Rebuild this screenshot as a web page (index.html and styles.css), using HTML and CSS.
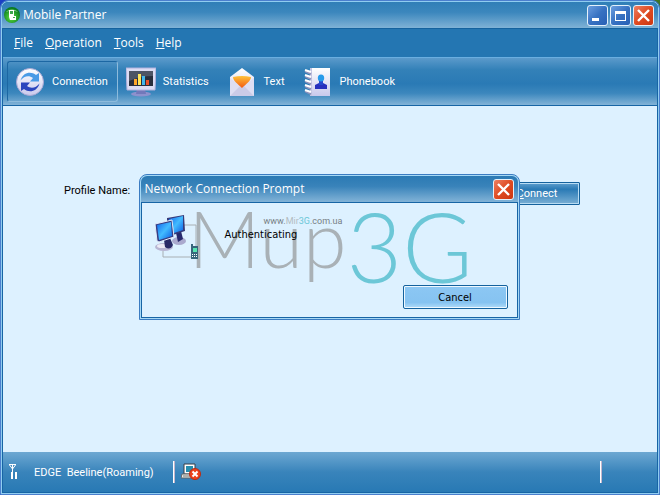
FILE: index.html
```html
<!DOCTYPE html>
<html lang="en">
<head>
    <meta charset="UTF-8">
    <meta name="viewport" content="width=device-width, initial-scale=1.0">
    <title>Mobile Partner</title>
    <link rel="stylesheet" href="styles.css">
</head>
<body>
    <div class="window">
        <!-- Title bar -->
        <header class="titlebar">
            <svg class="app-icon" width="18" height="18" viewBox="0 0 18 18">
                <defs>
                    <radialGradient id="green" cx="45%" cy="65%" r="60%">
                        <stop offset="0" stop-color="#5fe03c"/>
                        <stop offset="1" stop-color="#087a22"/>
                    </radialGradient>
                </defs>
                <circle cx="9" cy="9" r="8" fill="url(#green)"/>
                <path d="M3 6a7 5 0 0 1 12 0a16 16 0 0 0-12 0z" fill="#b5e8ae" opacity=".7"/>
                <path d="M6 4h5v6h2v4H7l-1-3z" fill="#fff"/>
                <path d="M7 5h3v3H7zM10 11h2v1h-2z" fill="#3fa44e"/>
            </svg>
            <h1>Mobile Partner</h1>
            <div class="window-buttons">
                <button class="win-btn" aria-label="Minimize">
                    <svg width="19" height="19" viewBox="0 0 19 19"><path d="M4 12h7v3H4z" fill="#fff"/></svg>
                </button>
                <button class="win-btn" aria-label="Maximize">
                    <svg width="19" height="19" viewBox="0 0 19 19"><path d="M4 5h11v10H4zM5 8v6h9V8z" fill="#fff" fill-rule="evenodd"/></svg>
                </button>
                <button class="win-btn close" aria-label="Close">
                    <svg width="19" height="19" viewBox="0 0 19 19"><path d="M4 4l11 11M15 4L4 15" stroke="#fff" stroke-width="2.4"/></svg>
                </button>
            </div>
        </header>

        <!-- Menu -->
        <nav class="menu">
            <a href="#file"><u>F</u>ile</a>
            <a href="#operation"><u>O</u>peration</a>
            <a href="#tools"><u>T</u>ools</a>
            <a href="#help"><u>H</u>elp</a>
        </nav>

        <!-- Toolbar -->
        <div class="toolbar">
            <button class="tool active">
                <svg width="30" height="30" viewBox="0 0 30 30">
                    <defs>
                        <linearGradient id="disc" x2="0" y2="1">
                            <stop offset="0" stop-color="#fff"/>
                            <stop offset="1" stop-color="#c9c9ec"/>
                        </linearGradient>
                    </defs>
                    <circle cx="15" cy="15" r="13.5" fill="url(#disc)" stroke="#a8a8d4"/>
                    <path d="M5.500 13.500C8 5 16 4 21 8l3-2v8.500h-9l3-3.500C14 8 9 9 5.500 13.500z" fill="#4a9be6"/>
                    <path d="M24.500 16.500C22 25 14 26 9 22l-3 2v-8.500h9L12 19c4 3 9 2 12.500-2.500z" fill="#2b45bd"/>
                </svg>
                <span>Connection</span>
            </button>
            <button class="tool">
                <svg width="30" height="30" viewBox="0 0 30 30">
                    <ellipse cx="15" cy="27" rx="10" ry="2.500" fill="#8d91cd"/>
                    <path d="M11 22h8l1 5H10z" fill="#7278ba"/>
                    <path d="M0 1h30l-1 22H1z" fill="#dcdcf4" stroke="#b0b0dc"/>
                    <path d="M3 4h24v15H3z" fill="#292e3d"/>
                    <path d="M3 4h24v5q-12 0-24 5z" fill="#4d5465"/>
                    <path d="M8 12h3v6H8z" fill="#ffa629"/>
                    <path d="M12 7h3v11h-3z" fill="#ffe45b"/>
                    <path d="M16 9h3v9h-3z" fill="#42b7ed"/>
                    <path d="M20 13h3v5h-3z" fill="#e94f28"/>
                </svg>
                <span>Statistics</span>
            </button>
            <button class="tool">
                <svg width="30" height="30" viewBox="0 0 30 30">
                    <defs>
                        <linearGradient id="orange" x2="0" y2="1">
                            <stop offset="0" stop-color="#ffc13a"/>
                            <stop offset="1" stop-color="#f25a12"/>
                        </linearGradient>
                    </defs>
                    <path d="M3 10L15 1l12 9v19H3z" fill="url(#disc)"/>
                    <path d="M3 11l12 10 12-10v18H3z" fill="#dedef3"/>
                    <path d="M3 29l10-10h4l10 10z" fill="#cbcbe7"/>
                    <path d="M6 10q9-2 18 0c0 4-5 7-9 11-4-4-9-7-9-11z" fill="url(#orange)"/>
                </svg>
                <span>Text</span>
            </button>
            <button class="tool">
                <svg width="30" height="30" viewBox="0 0 30 30">
                    <path d="M7 1h20v28H7z" fill="url(#disc)"/>
                    <path d="M7 1h2v28H7z" fill="#c3c4e2"/>
                    <path d="M2 4l6 3M2 9l6 3M2 14l6 3M2 19l6 3M2 24l6 3" stroke="#8f93bc" stroke-width="2"/>
                    <path d="M2 3l6 2M2 8l6 2M2 13l6 2M2 18l6 2M2 23l6 2" stroke="#fff" stroke-width="2"/>
                    <path d="M12 22v-4l4-2h4l4 2v4z" fill="#2830bd"/>
                    <path d="M16 13h4v5h-4z" fill="#2549cd"/>
                    <ellipse cx="18" cy="11" rx="3.200" ry="3.500" fill="#289bea"/>
                </svg>
                <span>Phonebook</span>
            </button>
        </div>

        <!-- Connection page -->
        <main class="content">
            <form class="profile">
                <label for="profile">Profile Name:</label>
                <select id="profile"></select>
                <button type="button" class="connect"><u>C</u>onnect</button>
            </form>
        </main>

        <!-- Status bar -->
        <footer class="statusbar">
            <svg class="signal" width="10" height="18" viewBox="0 0 10 18">
                <path d="M0 1.500h7M.5 2l3 4 3-4M3.500 1v8" fill="none" stroke="#fff"/>
                <path d="M2 9h2v7H2zM6 9h2v7H6z" fill="#fff"/>
            </svg>
            <span class="network">EDGE&nbsp; Beeline(Roaming)</span>
            <span class="divider"></span>
            <svg width="20" height="18" viewBox="0 0 20 18">
                <path d="M3 1h11v10H3z" fill="#fff" stroke="#383f49"/>
                <path d="M5 3h7v6H5z" fill="#278dae"/>
                <path d="M1 11h13l-1 4H0z" fill="#efefe8" stroke="#5f6468"/>
                <path d="M2 13h8" stroke="#6e7377"/>
                <circle cx="14" cy="11" r="5.500" fill="#ed411b" stroke="#b92c13"/>
                <path d="M11.500 8.500l5 5M16.500 8.500l-5 5" stroke="#fff" stroke-width="2"/>
            </svg>
            <span class="divider last"></span>
        </footer>
    </div>

    <!-- Connection prompt -->
    <div class="overlay">
        <div class="dialog" role="dialog" aria-labelledby="prompt-title">
            <div class="dialog-title">
                <h2 id="prompt-title">Network Connection Prompt</h2>
                <button class="win-btn close" aria-label="Close prompt">
                    <svg width="19" height="19" viewBox="0 0 19 19"><path d="M4 4l11 11M15 4L4 15" stroke="#fff" stroke-width="2.4"/></svg>
                </button>
            </div>
            <div class="dialog-body">
                <div class="watermark">
                    <span class="site">www.<i>Mir</i><b>3G</b>.com.ua</span>
                    <span class="brand">Mup<b>3G</b></span>
                </div>
                <svg class="network-icon" width="46" height="46" viewBox="0 0 46 46">
                    <defs>
                        <linearGradient id="screen" x2="1" y2="1">
                            <stop offset="0" stop-color="#1269ee"/>
                            <stop offset=".5" stop-color="#42bbff"/>
                            <stop offset="1" stop-color="#0b5ce5"/>
                        </linearGradient>
                    </defs>
                    <path d="M29 10h12v22M8 36v6h28" fill="none" stroke="#a8afb3"/>
                    <ellipse cx="24" cy="26" rx="7" ry="4" fill="#aaa9ce"/>
                    <path d="M21 18l5-2 2 8-5 3z" fill="#27296d"/>
                    <path d="M12 3l17-3 1 16-15 5-3-3z" fill="#353b7b"/>
                    <path d="M14 4l14-3v14l-12 4z" fill="url(#screen)"/>
                    <ellipse cx="9" cy="32" rx="9" ry="4" fill="#b7b5d3"/>
                    <ellipse cx="7" cy="31" rx="5" ry="2" fill="#eceaf5"/>
                    <path d="M9 25l6-2 3 7q-3 6-8 2z" fill="#282967"/>
                    <path d="M0 9l17-4 2 17-15 5-2-1z" fill="#383e83" stroke="#e1eafa"/>
                    <path d="M2 10l14-3 1 14-13 4z" fill="url(#screen)"/>
                    <path d="M36 31h7v13h-7zM36 29h2v3h-2z" fill="#38667b"/>
                    <path d="M38 33h4v4h-4z" fill="#56e6b2"/>
                    <path d="M37 39h1v1h-1zM39 39h1v1h-1zM41 39h1v1h-1zM37 41h1v1h-1zM39 41h1v1h-1zM41 41h1v1h-1z" fill="#fff"/>
                </svg>
                <p>Authenticating</p>
                <button class="cancel">Cancel</button>
            </div>
        </div>
    </div>
</body>
</html>
```
FILE: styles.css
```css
/* General Styles */
* {
    margin: 0;
    padding: 0;
    box-sizing: border-box;
}

body {
    min-height: 100vh;
    display: flex;
    background: linear-gradient(to right, #1b3fc4 50%, #3d7426 50%);
    font-family: Roboto, Arial, sans-serif;
    font-size: 11px;
    color: #000;
}

button {
    font: inherit;
    cursor: pointer;
}

svg {
    display: block;
    flex: none;
}

.window {
    flex: 1;
    display: flex;
    flex-direction: column;
    border: 1px solid #4b7fce;
    border-radius: 8px 8px 0 0;
    background: #1765a5;
    box-shadow: inset 0 0 0 1px #90cdf0;
    padding: 1px;
    overflow: hidden;
}

/* Title bar */
.titlebar {
    height: 26px;
    display: flex;
    align-items: center;
    gap: 2px;
    padding: 0 4px 0 1px;
    border-radius: 6px 6px 0 0;
    background: linear-gradient(#307fb7, #3c87bd 40%, #7fb2d6);
}

.titlebar h1,
.dialog-title h2 {
    font: 12px/16px "Open Sans", sans-serif;
    color: #fff;
}

.window-buttons {
    display: flex;
    gap: 2px;
    margin-left: auto;
}

.win-btn {
    width: 21px;
    height: 21px;
    border: 1px solid #e4f1fb;
    border-radius: 3px;
    background: linear-gradient(135deg, #6b9ee0, #3872c2 50%, #2860b5);
}

.win-btn.close {
    background: linear-gradient(135deg, #ed8063, #df4b22 50%, #cc3610);
}

/* Menu */
.menu {
    height: 29px;
    display: flex;
    align-items: center;
    gap: 12px;
    margin: 0 1px;
    padding: 0 11px;
    border-top: 1px solid #14629e;
    background: #2476b2;
    font: 12px/16px "Open Sans", sans-serif;
}

.menu a {
    color: #fff;
    text-decoration: none;
}

/* Toolbar */
.toolbar {
    height: 49px;
    display: flex;
    margin: 0 1px;
    padding: 3px 4px;
    border-top: 1px solid #6aaee0;
    border-bottom: 1px solid #1765a5;
    background: linear-gradient(#5b9acb, #3381b8 25%, #2a7ab5 55%, #3c87bd 75%, #82b3d7);
}

.tool {
    display: flex;
    align-items: center;
    gap: 7px;
    padding: 0 9px 0 7px;
    border: 1px solid transparent;
    border-radius: 3px;
    background: none;
    color: #fff;
}

.tool.active {
    border-color: #1c67a3 #8dbbdc #8dbbdc #1c67a3;
}

/* Connection page */
.content {
    flex: 1;
    margin: 0 1px;
    padding: 76px 77px 0 61px;
    background: #ddf1ff;
}

.profile {
    display: flex;
    gap: 14px;
}

.profile label {
    line-height: 18px;
}

.profile select {
    flex: 1;
    height: 21px;
    border: 1px solid #2476b2;
    background: #fff;
}

.connect {
    width: 86px;
    height: 23px;
    border: 1px solid #14629e;
    border-radius: 1px;
    background: linear-gradient(#5f9fce, #2a7ab5 30%, #79afd5);
    box-shadow: inset 0 0 0 1px #b8dcf3;
    color: #fff;
}

/* Status bar */
.statusbar {
    height: 40px;
    display: flex;
    align-items: center;
    margin: 0 1px 1px;
    padding: 0 55px 0 6px;
    background: linear-gradient(#6da8d2, #3984bb 50%, #2879b4);
    color: #fff;
}

.network {
    margin: 0 19px 0 15px;
}

.divider {
    width: 2px;
    height: 22px;
    margin-right: 6px;
    border-left: 1px solid #fff;
    background: #c5b6cc;
}

.divider.last {
    margin: 0 0 0 auto;
}

/* Connection prompt */
.overlay {
    position: absolute;
    inset: 0;
    display: flex;
    align-items: center;
    justify-content: center;
    padding: 0 2px 1px 0;
}

.dialog {
    width: 381px;
    padding: 1px;
    border: 1px solid #3b7cc2;
    border-radius: 8px 8px 0 0;
    background: #a5d8f5;
}

.dialog-title {
    height: 26px;
    display: flex;
    align-items: center;
    justify-content: space-between;
    padding: 0 4px;
    border-radius: 6px 6px 0 0;
    background: linear-gradient(#2b7ab4, #3983ba 40%, #82b3d7);
}

.dialog-body {
    position: relative;
    height: 116px;
    display: grid;
    grid-template-columns: 46px 1fr;
    grid-template-rows: 1fr 24px;
    gap: 0 24px;
    padding: 12px 9px 8px 13px;
    border: 1px solid #1765a5;
    background: #ddf1ff;
}

.dialog-body p {
    position: relative;
    padding-top: 12px;
    line-height: 16px;
    font-family: "DejaVu Sans Condensed", "DejaVu Sans", sans-serif;
}

.network-icon {
    position: relative;
}

.cancel {
    position: relative;
    grid-column: 2;
    justify-self: end;
    width: 105px;
    border: 1px solid #14629e;
    border-radius: 2px;
    background: linear-gradient(#8cc7f3, #86c3f1 75%, #b2dcf9);
    box-shadow: inset 0 0 0 1px #eef8ff;
    font-family: "DejaVu Sans Condensed", "DejaVu Sans", sans-serif;
}

.watermark {
    position: absolute;
    left: 47px;
    top: 0;
    color: #a9b1b6;
}

.watermark b {
    color: #6cc7d7;
    font-weight: inherit;
}

.brand {
    display: block;
    font: 300 79px/70px Lato, sans-serif;
}

.brand b {
    font-size: 96px;
    vertical-align: -15px;
}

.site {
    position: absolute;
    left: 75px;
    top: 11px;
    font: 9px/14px Roboto, sans-serif;
    color: #777f84;
}

.site i {
    color: #b4bcc1;
    font-style: normal;
}
```
